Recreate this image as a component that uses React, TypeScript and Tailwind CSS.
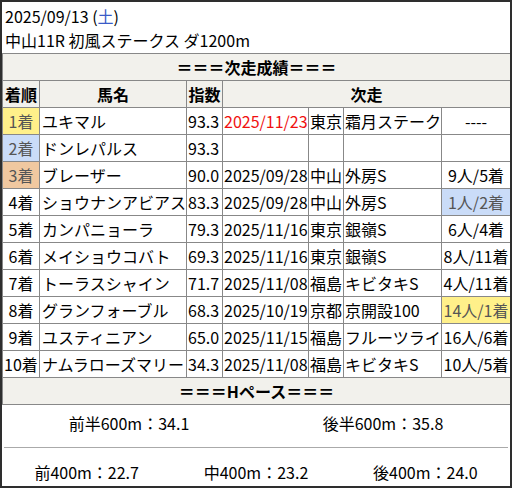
import React from "react";

type Row = {
  rank: string;
  name: string;
  score: string;
  date?: string;
  place?: string;
  race?: string;
  result?: string;
  rankBg?: string;
  resultBg?: string;
  dateRed?: boolean;
};

const rows: Row[] = [
  { rank: "1着", name: "ユキマル", score: "93.3", date: "2025/11/23", place: "東京", race: "霜月ステークス", result: "----", rankBg: "bg-[#fff08a] text-[#555]", dateRed: true },
  { rank: "2着", name: "ドンレパルス", score: "93.3", rankBg: "bg-[#cadcf8] text-[#555]" },
  { rank: "3着", name: "ブレーザー", score: "90.0", date: "2025/09/28", place: "中山", race: "外房S", result: "9人/5着", rankBg: "bg-[#f0c8a0] text-[#555]" },
  { rank: "4着", name: "ショウナンアビアス", score: "83.3", date: "2025/09/28", place: "中山", race: "外房S", result: "1人/2着", resultBg: "bg-[#cadcf8] text-[#555]" },
  { rank: "5着", name: "カンパニョーラ", score: "79.3", date: "2025/11/16", place: "東京", race: "銀嶺S", result: "6人/4着" },
  { rank: "6着", name: "メイショウコバト", score: "69.3", date: "2025/11/16", place: "東京", race: "銀嶺S", result: "8人/11着" },
  { rank: "7着", name: "トーラスシャイン", score: "71.7", date: "2025/11/08", place: "福島", race: "キビタキS", result: "4人/11着" },
  { rank: "8着", name: "グランフォーブル", score: "68.3", date: "2025/10/19", place: "京都", race: "京開設100", result: "14人/1着", resultBg: "bg-[#fff08a] text-[#555]" },
  { rank: "9着", name: "ユスティニアン", score: "65.0", date: "2025/11/15", place: "福島", race: "フルーツラインC", result: "16人/6着" },
  { rank: "10着", name: "ナムラローズマリー", score: "34.3", date: "2025/11/08", place: "福島", race: "キビタキS", result: "10人/5着" },
];

const cell = "border border-[#888] h-[27px] p-0 leading-[26px] whitespace-nowrap overflow-hidden";

export default function App() {
  return (
    <div
      className="w-[512px] h-[488px] border-2 border-[#2e2e2e] bg-white text-black text-[16px] overflow-hidden"
      style={{ fontFamily: '"Noto Sans CJK JP", "Noto Sans", sans-serif' }}
    >
      <div className="pt-[2px] pl-[3px] leading-[24px]">
        <div>
          2025/09/13 (<span className="text-[#3a5bc7]">土</span>)
        </div>
        <div>中山11R 初風ステークス ダ1200m</div>
      </div>
      <table className="table-fixed border-collapse w-[508px] mt-px">
        <colgroup>
          <col className="w-[37px]" />
          <col className="w-[147px]" />
          <col className="w-[36px]" />
          <col className="w-[86px]" />
          <col className="w-[35px]" />
          <col className="w-[98px]" />
          <col className="w-[69px]" />
        </colgroup>
        <tbody>
          <tr className="bg-[#f2f1ec] font-bold">
            <td colSpan={7} className={`${cell} text-center`}>＝＝＝次走成績＝＝＝</td>
          </tr>
          <tr className="bg-[#f2f1ec] font-bold">
            <td className={`${cell} text-center`}>着順</td>
            <td className={`${cell} text-center`}>馬名</td>
            <td className={`${cell} text-center`}>指数</td>
            <td colSpan={4} className={`${cell} text-center`}>次走</td>
          </tr>
          {rows.map((r) => (
            <tr key={r.rank}>
              <td className={`${cell} text-center ${r.rankBg ?? ""}`}>{r.rank}</td>
              <td className={`${cell} pl-[2px]`}>{r.name}</td>
              <td className={`${cell} pl-px`}>{r.score}</td>
              <td className={`${cell} pl-px ${r.dateRed ? "text-[#f01010]" : ""}`}>{r.date}</td>
              <td className={`${cell} pl-px`}>{r.place}</td>
              <td className={`${cell} pl-px`}>{r.race}</td>
              <td className={`${cell} text-center ${r.resultBg ?? ""}`}>{r.result}</td>
            </tr>
          ))}
          <tr className="bg-[#f2f1ec] font-bold">
            <td colSpan={7} className={`${cell} text-center`}>＝＝＝Hペース＝＝＝</td>
          </tr>
        </tbody>
      </table>
      <div className="grid grid-cols-2 h-[42px] pt-[6px] leading-[24px] text-center">
        <div>前半600m：34.1</div>
        <div>後半600m：35.8</div>
      </div>
      <div className="mx-[2px] border-t border-[#aaa]" />
      <div className="grid grid-cols-3 pt-[12px] leading-[24px] text-center">
        <div>前400m：22.7</div>
        <div>中400m：23.2</div>
        <div>後400m：24.0</div>
      </div>
    </div>
  );
}
